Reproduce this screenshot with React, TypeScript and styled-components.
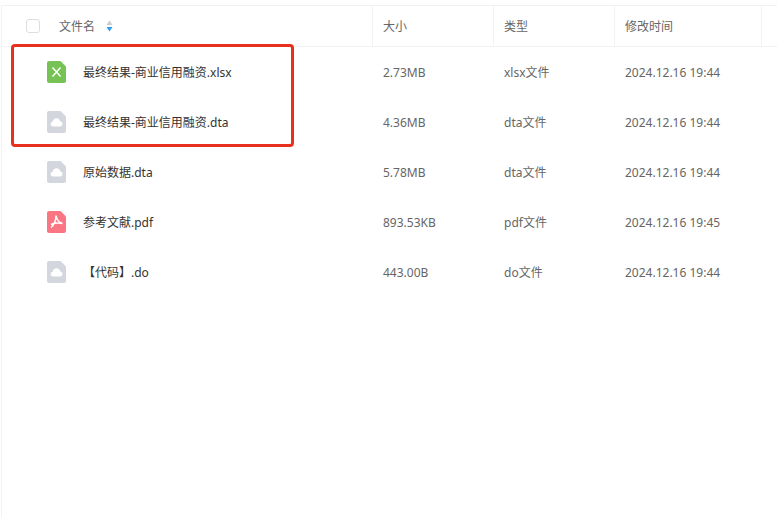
import React from 'react'
import styled, { createGlobalStyle } from 'styled-components'

const GlobalStyle = createGlobalStyle`
  html, body {
    margin: 0;
    padding: 0;
    background: #fff;
    overflow: hidden;
  }
`

const Page = styled.div`
  position: relative;
  width: 777px;
  height: 517px;
  box-sizing: border-box;
  padding: 5px 0 0 1px;
  background: #fff;
  font-family: 'Noto Sans', 'Noto Sans CJK SC', sans-serif;
  font-size: 12px;
  line-height: 16px;
`

const List = styled.div`
  height: 100%;
  border-left: 1px solid #f1f2f3;
`

const HeaderRow = styled.div`
  display: grid;
  grid-template-columns: 371px 121px 121px 147px 16px;
  height: 42px;
  box-sizing: border-box;
  border-top: 1px solid #f1f2f3;
  border-bottom: 1px solid #f1f2f3;
`

const HeaderCell = styled.div`
  display: flex;
  align-items: center;
  box-sizing: border-box;
  padding-left: 10px;
  border-right: 1px solid #f1f2f3;
  color: #666;

  &:last-child {
    border-right: 0;
  }
`

const HeaderLabel = styled.span`
  padding-top: 2px;
`

const NameHeader = styled(HeaderCell)`
  padding-left: 24px;
`

const Checkbox = styled.span`
  width: 12px;
  height: 12px;
  border: 1px solid #dcdee0;
  border-radius: 3px;
  margin-right: 19px;
`

const SortIcon = styled.svg`
  width: 7px;
  height: 12px;
  margin-left: 11px;
`

const Row = styled.div`
  display: grid;
  grid-template-columns: 371px 121px 121px 147px 16px;
  height: 50px;
  align-items: center;
`

const NameCell = styled.div`
  display: flex;
  align-items: center;
  padding-left: 45px;
  color: #333;
`

const FileName = styled.span`
  margin-left: 17px;
  padding-top: 2px;
`

const Cell = styled.div`
  padding: 2px 0 0 10px;
  color: #666;
`

const IconSvg = styled.svg`
  display: block;
  width: 19px;
  height: 22px;
  flex: none;
`

const Highlight = styled.div`
  position: absolute;
  left: 11px;
  top: 44px;
  width: 283px;
  height: 103px;
  box-sizing: border-box;
  border: 3px solid #e9301f;
  border-radius: 4px;
`

type Kind = 'xlsx' | 'cloud' | 'pdf'

const sheet = 'M2 0H13.5L19 5.5V20C19 21.1 18.1 22 17 22H2C0.9 22 0 21.1 0 20V2C0 0.9 0.9 0 2 0Z'

function FileIcon({ kind }: { kind: Kind }) {
  const fill = kind === 'xlsx' ? '#76c255' : kind === 'pdf' ? '#fb7683' : '#d3d7dd'
  return (
    <IconSvg viewBox="0 0 19 22">
      <path d={sheet} fill={fill} />
      {kind === 'xlsx' && <path d="M5.5 6.5L13.5 15.5M13.5 6.5L5.5 15.5" stroke="#fff" strokeWidth="1.5" fill="none" />}
      {kind === 'cloud' && (
        <path
          d="M6.2 15.5C4.7 15.5 3.6 14.5 3.6 13.1C3.6 11.8 4.5 10.9 5.7 10.7C6 8.7 7.5 7.2 9.5 7.2C11.5 7.2 13 8.6 13.4 10.6C14.6 10.8 15.5 11.8 15.5 13.1C15.5 14.5 14.4 15.5 13 15.5Z"
          fill="#fff"
        />
      )}
      {kind === 'pdf' && (
        <path
          d="M9 4.5C9.6 8.5 11 11 15.5 12.5M9 4.5C9 9.5 7 14 4 16.5M4 13.5C7 12 11 11.8 15.5 12.5"
          stroke="#fff"
          strokeWidth="1.5"
          fill="none"
        />
      )}
    </IconSvg>
  )
}

const files: { name: string; kind: Kind; size: string; type: string; time: string }[] = [
  { name: '最终结果-商业信用融资.xlsx', kind: 'xlsx', size: '2.73MB', type: 'xlsx文件', time: '2024.12.16 19:44' },
  { name: '最终结果-商业信用融资.dta', kind: 'cloud', size: '4.36MB', type: 'dta文件', time: '2024.12.16 19:44' },
  { name: '原始数据.dta', kind: 'cloud', size: '5.78MB', type: 'dta文件', time: '2024.12.16 19:44' },
  { name: '参考文献.pdf', kind: 'pdf', size: '893.53KB', type: 'pdf文件', time: '2024.12.16 19:45' },
  { name: '【代码】.do', kind: 'cloud', size: '443.00B', type: 'do文件', time: '2024.12.16 19:44' }
]

export default function App() {
  return (
    <Page>
      <GlobalStyle />
      <List>
        <HeaderRow>
          <NameHeader>
            <Checkbox />
            <HeaderLabel>文件名</HeaderLabel>
            <SortIcon viewBox="0 0 7 12">
              <path d="M3.5 0.5L6.5 5H0.5Z" fill="#c8ccd2" />
              <path d="M3.5 11.5L0.5 7H6.5Z" fill="#2f9bf5" />
            </SortIcon>
          </NameHeader>
          <HeaderCell>
            <HeaderLabel>大小</HeaderLabel>
          </HeaderCell>
          <HeaderCell>
            <HeaderLabel>类型</HeaderLabel>
          </HeaderCell>
          <HeaderCell>
            <HeaderLabel>修改时间</HeaderLabel>
          </HeaderCell>
          <HeaderCell />
        </HeaderRow>
        {files.map(file => (
          <Row key={file.name}>
            <NameCell>
              <FileIcon kind={file.kind} />
              <FileName>{file.name}</FileName>
            </NameCell>
            <Cell>{file.size}</Cell>
            <Cell>{file.type}</Cell>
            <Cell>{file.time}</Cell>
          </Row>
        ))}
      </List>
      <Highlight />
    </Page>
  )
}
